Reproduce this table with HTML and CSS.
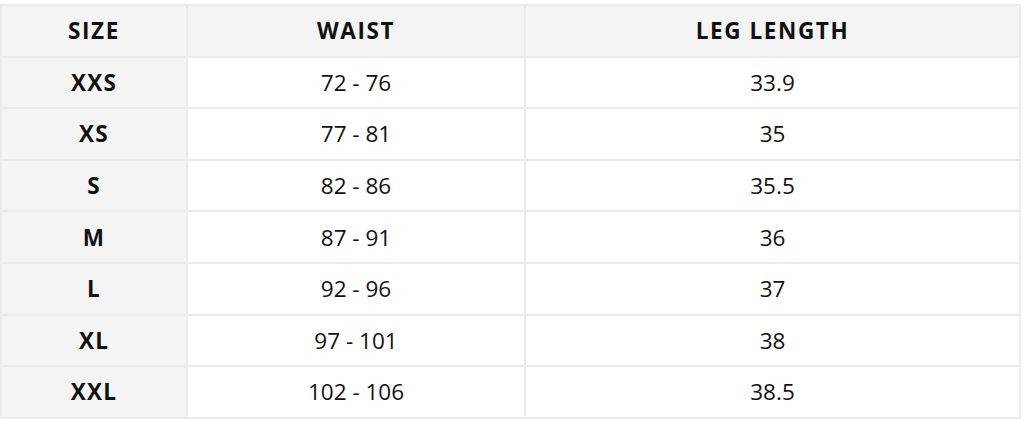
FILE: index.html
```html
<!DOCTYPE html>
<html>
<head>
<meta charset="utf-8">
<link rel="stylesheet" href="styles.css">
</head>
<body>
<div class="wrap">
<table class="size-table">
  <thead>
    <tr><th class="c-size">SIZE</th><th class="c-waist">WAIST</th><th class="c-leg">LEG LENGTH</th></tr>
  </thead>
  <tbody>
    <tr><th>XXS</th><td>72 - 76</td><td>33.9</td></tr>
    <tr><th>XS</th><td>77 - 81</td><td>35</td></tr>
    <tr><th>S</th><td>82 - 86</td><td>35.5</td></tr>
    <tr><th>M</th><td>87 - 91</td><td>36</td></tr>
    <tr><th>L</th><td>92 - 96</td><td>37</td></tr>
    <tr><th>XL</th><td>97 - 101</td><td>38</td></tr>
    <tr><th>XXL</th><td>102 - 106</td><td>38.5</td></tr>
  </tbody>
</table>
</div>
</body>
</html>
```
FILE: styles.css
```css
html, body {
  margin: 0;
  padding: 0;
  background: #ffffff;
}
.wrap {
  padding-top: 4px;
  width: 1021px;
}
.size-table {
  width: 100%;
  border-collapse: collapse;
  table-layout: fixed;
  font-family: "Open Sans", "Noto Sans", sans-serif;
  color: #111111;
}
.size-table th,
.size-table td {
  border: 2px solid #ebebeb;
  height: 49.6px;
  padding: 0;
  text-align: center;
  vertical-align: middle;
  font-size: 22.5px;
}
.size-table td {
  font-weight: 400;
}
.size-table th {
  font-weight: 700;
  background: #f4f4f4;
}
.size-table thead th {
  letter-spacing: 1.6px;
}
.size-table tbody th {
  letter-spacing: 1.2px;
}
.c-size { width: 184px; }
.c-waist { width: 336px; }
.c-leg { width: auto; }
```
